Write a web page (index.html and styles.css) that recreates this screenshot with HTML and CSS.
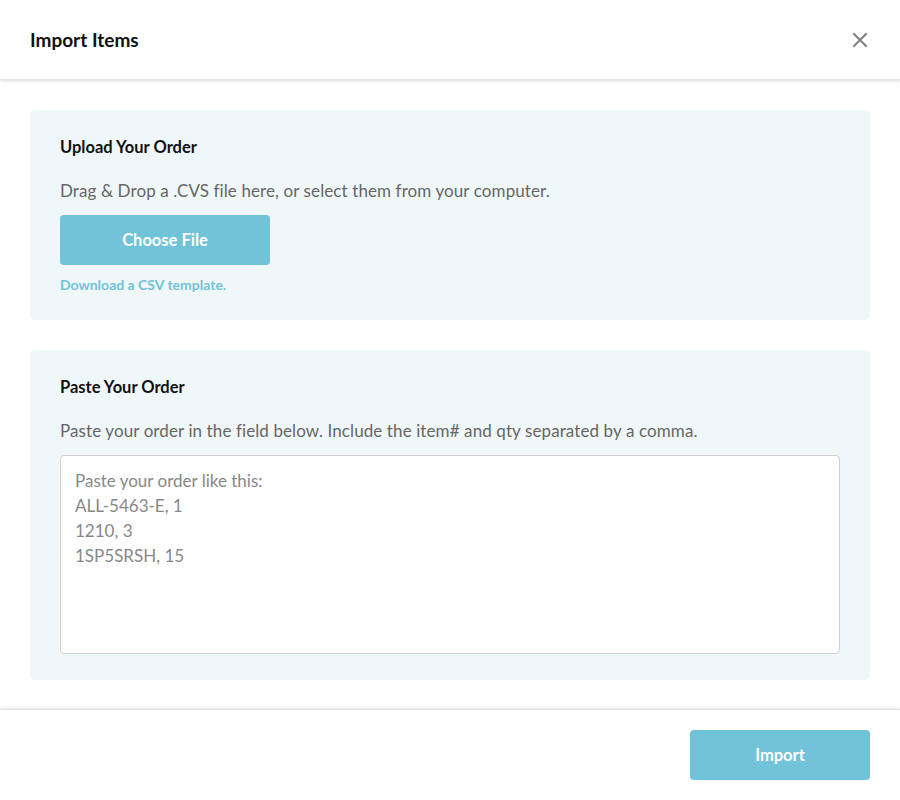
FILE: index.html
```html
<!DOCTYPE html>
<html lang="en">
<head>
<meta charset="utf-8">
<title>Import Items</title>
<link rel="stylesheet" href="styles.css">
</head>
<body>
<div class="modal">
  <header class="modal-header">
    <h1 class="modal-title">Import Items</h1>
    <button class="close" aria-label="Close">
      <svg width="16" height="16" viewBox="0 0 16 16"><path d="M2 2 L14 14 M14 2 L2 14" stroke="#808080" stroke-width="2" stroke-linecap="square" fill="none"/></svg>
    </button>
  </header>
  <main class="modal-body">
    <section class="panel panel-upload">
      <h2 class="panel-title">Upload Your Order</h2>
      <p class="panel-text">Drag &amp; Drop a .CVS file here, or select them from your computer.</p>
      <button class="btn btn-choose">Choose File</button>
      <a class="link" href="#">Download a CSV template.</a>
    </section>
    <section class="panel panel-paste">
      <h2 class="panel-title">Paste Your Order</h2>
      <p class="panel-text">Paste your order in the field below. Include the item# and qty separated by a comma.</p>
      <textarea class="order-field" placeholder="Paste your order like this:&#10;ALL-5463-E, 1&#10;1210, 3&#10;1SP5SRSH, 15"></textarea>
    </section>
  </main>
  <footer class="modal-footer">
    <button class="btn btn-import">Import</button>
  </footer>
</div>
</body>
</html>
```

FILE: styles.css
```css
* { box-sizing: border-box; }
html, body { margin: 0; padding: 0; background: #fff; }
body {
  font-family: "Lato", "Open Sans", sans-serif;
  color: #111;
  width: 900px;
  height: 800px;
  overflow: hidden;
}
.modal {
  display: flex;
  flex-direction: column;
  height: 800px;
}
.modal-header {
  height: 80px;
  flex: none;
  display: flex;
  align-items: center;
  justify-content: space-between;
  padding: 0 30px;
  box-shadow: 0 1px 3px rgba(0,0,0,0.15);
  border-bottom: 1px solid #e6e6e6;
  position: relative;
  z-index: 1;
}
.modal-title {
  margin: 0;
  font-size: 19px;
  font-weight: 700;
  color: #111;
}
.close {
  border: 0;
  background: none;
  padding: 0;
  margin-right: 2px;
  width: 16px;
  height: 16px;
  display: flex;
  cursor: pointer;
}
.modal-body {
  flex: 1;
  padding: 30px 30px 29px;
  display: flex;
  flex-direction: column;
  gap: 30px;
}
.panel {
  background: #f0f7f9;
  border-radius: 5px;
  padding: 27px 30px 0;
}
.panel-upload { height: 210px; }
.panel-paste { height: 330px; }
.panel-title {
  margin: 0;
  font-size: 16.5px;
  font-weight: 700;
  line-height: 20px;
  color: #111;
}
.panel-text {
  margin: 24px 0 0;
  font-size: 17px;
  letter-spacing: 0.1px;
  line-height: 20px;
  color: #666;
}
.btn {
  border: 0;
  border-radius: 4px;
  background: #70c3d8;
  color: #fff;
  font-family: inherit;
  font-size: 16.5px;
  font-weight: 700;
  cursor: pointer;
}
.btn-choose {
  display: block;
  margin-top: 14px;
  width: 210px;
  height: 50px;
}
.link {
  display: block;
  margin-top: 12px;
  font-size: 14px;
  font-weight: 700;
  color: #70c3d8;
  text-decoration: none;
  line-height: 16px;
}
.order-field {
  display: block;
  margin-top: 14px;
  width: 780px;
  height: 199px;
  border: 1px solid #cfcfcf;
  border-radius: 4px;
  background: #fff;
  padding: 12px 14px;
  font-family: inherit;
  font-size: 17px;
  line-height: 25px;
  resize: none;
  color: #333;
}
.order-field::placeholder { color: #888; opacity: 1; }
.modal-footer {
  flex: none;
  height: 91px;
  border-top: 1px solid #e3e3e3;
  box-shadow: 0 -1px 3px rgba(0,0,0,0.1);
  display: flex;
  justify-content: flex-end;
  align-items: flex-start;
  padding: 20px 30px 0;
}
.btn-import {
  width: 180px;
  height: 50px;
}
```
